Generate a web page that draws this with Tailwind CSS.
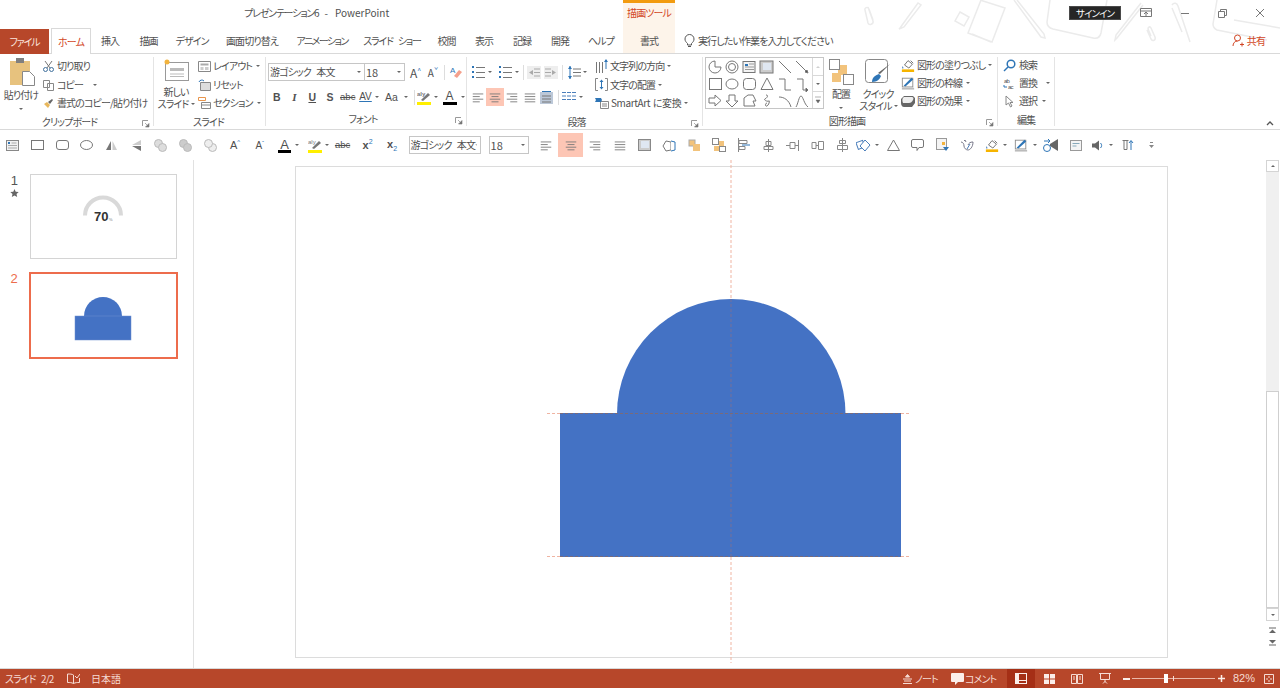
<!DOCTYPE html>
<html lang="ja">
<head>
<meta charset="UTF-8" />
<title>プレゼンテーション6 - PowerPoint</title>
<script src="https://cdn.jsdelivr.net/npm/@tailwindcss/browser@4"></script>
</head>
<body class="bg-white overflow-hidden">
<!-- shared small icons -->
<svg class="hidden">
  <symbol id="caret" viewBox="0 0 6 4"><path d="M1 1h4L3 3z" fill="#666"/></symbol>
  <symbol id="launch" viewBox="0 0 8 8"><path d="M.5 6V.5H6" fill="none" stroke="#999"/><path d="M3 3l3 3M7 3.500V7H3.500z" fill="#777" stroke="#777" stroke-width=".6"/></symbol>
  <symbol id="align-c" viewBox="0 0 16 16"><path d="M2 4.500h12M4 7.500h8M2 10.500h12M4 13.500h8" stroke="#777" fill="none"/></symbol>
  <symbol id="align-l" viewBox="0 0 16 16"><path d="M2 4.500h12M2 7.500h8M2 10.500h12M2 13.500h8" stroke="#777" fill="none"/></symbol>
  <symbol id="align-r" viewBox="0 0 16 16"><path d="M2 4.500h12M6 7.500h8M2 10.500h12M6 13.500h8" stroke="#777" fill="none"/></symbol>
  <symbol id="align-j" viewBox="0 0 16 16"><path d="M2 4.500h12M2 7.500h12M2 10.500h12M2 13.500h12" stroke="#777" fill="none"/></symbol>
  <symbol id="fill" viewBox="0 0 16 16"><path d="M4 8l4-5 5 4-4 4.500z" fill="#fff" stroke="#666"/><path d="M11 3l3 3" stroke="#666"/><path d="M2 9c-1 2-1 3 0 3s1-1 0-3z" fill="#4a7ebb"/><rect x="1" y="13" width="14" height="3" fill="#f6b400"/></symbol>
  <symbol id="line-pen" viewBox="0 0 16 16"><rect x="1.500" y="2.500" width="12" height="10" fill="#fff" stroke="#888"/><path d="M3 11l9-9 2 2-9 8z" fill="#2e75b6"/><rect x="1" y="13.500" width="14" height="2" fill="#bbb"/></symbol>
</svg>

<div class="relative w-[1280px] h-[688px] overflow-hidden flex flex-col text-[10px] tracking-[-0.9px] [word-spacing:4px] text-[#505050] font-['Noto_Sans_CJK_JP','Noto_Sans',sans-serif] [font-feature-settings:'palt']">

  <!-- faint doodles of the office theme -->
  <svg class="absolute left-[860px] top-0 w-[420px] h-[46px] pointer-events-none" viewBox="0 0 420 46" fill="none" stroke="#ebebeb" stroke-width="1.500">
    <path d="M8 7l5 14c1 3-4 5-5 2L5 10c-1-2 3-4 4-1l4 11"/>
    <path d="M40 28L58 3l3 2-17 22-5 2z"/>
    <path d="M100 12l9 5-5 9-9-5z"/>
    <path d="M120 0l25 8-13 34-24-9 13-33M112 34l19 8"/>
    <path d="M157 0l27 34 1 4-4-1-27-37"/>
    <path d="M190 0l-3 22c0 4 2 6 6 7l40 9c4 1 7-1 8-5l6-33"/>
    <path d="M283 5l-26 33-2 2 1-5 25-32"/>
    <path d="M287 30l4 9c2 3 5 1 4-2l-4-9c-1-2-3-1-3 1l3 7"/>
    <path d="M312 5c2-3 5-2 6 1l12 36M312 8l10 24"/>
    <path d="M357 0l-4 24c0 3 2 5 4 6l50 10M420 28l-46-8"/>
  </svg>

  <!-- title bar -->
  <div class="relative flex h-[28px] shrink-0 whitespace-nowrap">
    <div class="w-[244px]"></div>
    <div class="w-[379px] pt-[6px] leading-[14px] flex">
      <span class="tracking-[-1.2px]">プレゼンテーション6</span>
      <span class="ml-[6px] tracking-normal">-</span>
      <span class="ml-[7px] tracking-normal">PowerPoint</span>
    </div>
    <div class="w-[52px] bg-[#fdf4ea] border-t-[3px] border-[#f29b10] pt-[3px] text-center text-[#d24726] leading-[14px]">描画ツール</div>
    <div class="w-[394px]"></div>
    <div class="w-[52px] h-[14px] mt-[6px] bg-[#262626] border border-[#4a4a4a] text-white text-[9.500px] leading-[12px] text-center">サインイン</div>
    <div class="w-[19px]"></div>
    <div class="flex w-[140px]">
      <svg class="w-[12px] h-[10px] mt-[8px]" viewBox="0 0 12 10" fill="none" stroke="#777"><path d="M.5.500h11v8H.5zM.5 3h11M6 9V4M4 6l2-2 2 2"/></svg>
      <svg class="w-[10px] h-[10px] mt-[8px] ml-[28px]" viewBox="0 0 10 10" stroke="#777"><path d="M1 5.500h8"/></svg>
      <svg class="w-[9px] h-[9px] mt-[9px] ml-[28px]" viewBox="0 0 9 9" fill="none" stroke="#777"><path d="M.5 2.500h6v6h-6zM2.500 2.500v-2h6v6h-2"/></svg>
      <svg class="w-[10px] h-[10px] mt-[8px] ml-[28px]" viewBox="0 0 10 10" stroke="#777"><path d="M1 1l8 8M9 1l-8 8"/></svg>
    </div>
  </div>

  <!-- tabs -->
  <div class="relative flex h-[26px] shrink-0 border-b border-[#d9d9d9] leading-[25px] text-center whitespace-nowrap">
    <div class="w-[49px] h-[25px] mt-[1px] bg-[#b7472a] text-[#fbe5df] tracking-[-1.2px]">ファイル</div>
    <div class="w-[2px]"></div>
    <div class="w-[40px] h-[26px] bg-white border border-b-0 border-[#d9d9d9] text-[#d24726] z-10">ホーム</div>
    <div class="w-[38px]">挿入</div>
    <div class="w-[39px]">描画</div>
    <div class="w-[48px]">デザイン</div>
    <div class="w-[72px]">画面切り替え</div>
    <div class="w-[68px] tracking-[-1.6px]">アニメーション</div>
    <div class="w-[72px] whitespace-pre tracking-[-1.2px]">スライド ショー</div>
    <div class="w-[37px]">校閲</div>
    <div class="w-[38px]">表示</div>
    <div class="w-[38px]">記録</div>
    <div class="w-[38px]">開発</div>
    <div class="w-[44px]">ヘルプ</div>
    <div class="w-[52px] bg-[#fdf4ea]">書式</div>
    <div class="flex items-center pl-[9px] gap-[3px]">
      <svg class="w-[11px] h-[14px]" viewBox="0 0 11 14" fill="none" stroke="#555"><path d="M3.500 9.500C2 8 1 7 1 5a4.500 4.500 0 0 1 9 0c0 2-1 3-2.500 4.500v1.500h-4zM4 12.500h3"/></svg>
      <span>実行したい作業を入力してください</span>
    </div>
    <div class="ml-auto flex items-center pr-[15px] gap-[3px] text-[#d24726]">
      <svg class="w-[12px] h-[13px]" viewBox="0 0 12 13" fill="none" stroke="#d24726"><circle cx="5.500" cy="4" r="3"/><path d="M1 12c0-3 2-5 4.500-5M8 10.500h4M10 8.500v4"/></svg>
      <span>共有</span>
    </div>
  </div>

  <!-- ribbon -->
  <div class="relative flex h-[76px] shrink-0 border-b border-[#d9d9d9] leading-[18.5px] whitespace-nowrap">

    <!-- clipboard -->
    <div class="w-[154px] shrink-0 flex flex-col border-r border-[#e4e4e4] my-[3px]">
      <div class="flex h-[58px]">
        <div class="w-[42px] shrink-0 flex flex-col items-center">
          <svg class="w-[26px] h-[29px] ml-[2px]" viewBox="0 0 26 29"><rect x="1" y="4" width="20" height="24" fill="#e7c27e"/><rect x="7" y="1" width="8" height="5" fill="#7f7f7f"/><path d="M13.500 14.500h7l5 5v9h-12z" fill="#fff" stroke="#888"/></svg>
          <div class="leading-[14px] mt-[2px]">貼り付け</div>
          <svg class="w-[6px] h-[4px] mt-[5px]"><use href="#caret"/></svg>
        </div>
        <div class="flex flex-col ml-[1px]">
          <div class="flex items-center gap-[3px] h-[18.5px]">
            <svg class="w-[11px] h-[12px]" viewBox="0 0 11 12" fill="none" stroke="#41719c"><path d="M2 1l5 7M9 1L4 8" stroke="#777"/><circle cx="2.500" cy="9.500" r="2"/><circle cx="8.500" cy="9.500" r="2"/></svg>
            <span>切り取り</span>
          </div>
          <div class="flex items-center gap-[3px] h-[18.5px]">
            <svg class="w-[11px] h-[12px]" viewBox="0 0 11 12" fill="#fff" stroke="#888"><path d="M.5 1.500h6v7h-6zM4.500 4.500h6v7h-6z"/></svg>
            <span>コピー</span>
            <svg class="w-[6px] h-[4px] ml-[6px]"><use href="#caret"/></svg>
          </div>
          <div class="flex items-center gap-[3px] h-[18.5px]">
            <svg class="w-[11px] h-[11px]" viewBox="0 0 11 11"><path d="M1 6l3-2 3 3-2 3z" fill="#e8b75c"/><path d="M5 4l4-3 1 1-3 4z" fill="#666"/></svg>
            <span>書式のコピー/貼り付け</span>
          </div>
        </div>
      </div>
      <div class="relative h-[14px] mt-[2px] leading-[14px] text-center pr-[14px]">クリップボード
        <svg class="absolute right-[3px] bottom-[1px] w-[8px] h-[8px]"><use href="#launch"/></svg>
      </div>
    </div>

    <!-- slides -->
    <div class="w-[112px] shrink-0 flex flex-col border-r border-[#e4e4e4] my-[3px]">
      <div class="flex h-[58px]">
        <div class="w-[44px] shrink-0 flex flex-col items-center">
          <svg class="w-[26px] h-[23px] mt-[1px]" viewBox="0 0 26 23"><rect x="2.500" y="4.500" width="23" height="18" fill="#fff" stroke="#999"/><path d="M7 10h14v3H7z" fill="#bbb"/><path d="M7 16h14M7 18.500h14" stroke="#bbb"/><circle cx="4" cy="4" r="2.500" fill="#f2b33d"/></svg>
          <div class="leading-[12px] mt-[5px]">新しい</div>
          <div class="leading-[12px] flex items-center pl-[2px]">スライド<svg class="w-[6px] h-[4px] ml-[2px]"><use href="#caret"/></svg></div>
        </div>
        <div class="flex flex-col">
          <div class="flex items-center gap-[2px] h-[18.5px]">
            <svg class="w-[13px] h-[11px]" viewBox="0 0 13 11" fill="#fff" stroke="#888"><path d="M.5.500h12v10H.5z"/><path d="M2.500 2.500h8v2h-8z" fill="#aaa" stroke="none"/><path d="M2.500 6h3v3h-3zM7 6h3.500v3H7z" fill="#ccc" stroke="none"/></svg>
            <span>レイアウト</span>
            <svg class="w-[6px] h-[4px] ml-[1px]"><use href="#caret"/></svg>
          </div>
          <div class="flex items-center gap-[2px] h-[18.5px]">
            <svg class="w-[13px] h-[12px]" viewBox="0 0 13 12" fill="#ddd" stroke="#888"><path d="M2.500 3.500h10v8h-10z"/><path d="M1 3a3 3 0 0 1 5-1" fill="none" stroke="#2e75b6"/></svg>
            <span>リセット</span>
          </div>
          <div class="flex items-center gap-[2px] h-[18.5px]">
            <svg class="w-[13px] h-[12px]" viewBox="0 0 13 12" fill="#fff" stroke="#888"><path d="M.5 .5h7v3h-7z" stroke="#e8954c"/><path d="M3.500 5.500h9v6h-9zM3.500 8h9"/></svg>
            <span>セクション</span>
            <svg class="w-[6px] h-[4px] ml-[1px]"><use href="#caret"/></svg>
          </div>
        </div>
      </div>
      <div class="h-[14px] mt-[2px] leading-[14px] text-center pr-[2px]">スライド</div>
    </div>

    <!-- font -->
    <div class="w-[201px] shrink-0 flex flex-col border-r border-[#e4e4e4] my-[3px] pl-[2px]">
      <div class="h-[58px]">
        <div class="flex items-center h-[30px]">
          <div class="w-[97px] h-[18px] border border-[#c6c6c6] pl-[1px] leading-[16px] flex justify-between items-center pr-[2px]">游ゴシック 本文<svg class="w-[6px] h-[4px]"><use href="#caret"/></svg></div>
          <div class="w-[41px] h-[18px] -ml-[1px] border border-[#c6c6c6] pl-[1px] leading-[16px] flex justify-between items-center pr-[2px] text-[11px] tracking-normal">18<svg class="w-[6px] h-[4px]"><use href="#caret"/></svg></div>
          <div class="w-[19px] text-center ml-[1px] text-[12px] tracking-normal">A<span class="text-[#2e75b6] text-[7px] align-super">^</span></div>
          <div class="w-[16px] text-center text-[10px] tracking-normal">A<span class="text-[#2e75b6] text-[7px] align-super">ˇ</span></div>
          <div class="w-[1px] h-[15px] bg-[#ddd] ml-[3px]"></div>
          <svg class="w-[14px] h-[14px] ml-[4px]" viewBox="0 0 14 14"><text x="1" y="8" font-size="8" fill="#2e75b6" font-family="Liberation Sans">A</text><path d="M5 11l5-6 3 2-5 6z" fill="#f4a08c"/></svg>
        </div>
        <div class="flex items-center h-[18px] mt-[1px] text-[10.5px] font-bold tracking-normal">
          <div class="w-[17.5px] text-center font-['Liberation_Sans']">B</div>
          <div class="w-[18px] text-center italic font-['Liberation_Serif'] text-[11px]">I</div>
          <div class="w-[17.5px] text-center underline font-['Liberation_Sans']">U</div>
          <div class="w-[18px] text-center text-[#555] font-['Liberation_Sans']">S</div>
          <div class="w-[17.5px] text-center line-through font-normal font-['Liberation_Sans'] text-[9.500px]">abc</div>
          <div class="w-[18px] text-center font-normal font-['Liberation_Sans'] underline decoration-[#2e75b6] text-[10px]">AV</div>
          <svg class="w-[6px] h-[4px] -ml-[1px]"><use href="#caret"/></svg>
          <div class="w-[22px] text-center font-normal font-['Liberation_Sans'] ml-[1px]">Aa</div>
          <svg class="w-[6px] h-[4px]"><use href="#caret"/></svg>
          <div class="w-[1px] h-[15px] bg-[#ddd] ml-[5px]"></div>
          <svg class="w-[14px] h-[15px] ml-[2px]" viewBox="0 0 14 15"><path d="M4 10l7-7 2 2-7 6z" fill="#777"/><text x="0" y="6" font-size="6" fill="#777" font-family="Liberation Sans">aly</text><rect x="0" y="12" width="14" height="3" fill="#ffef00"/></svg>
          <svg class="w-[6px] h-[4px] ml-[2px]"><use href="#caret"/></svg>
          <div class="w-[14px] text-center leading-[12px] font-normal border-b-[3px] border-black h-[15px] ml-[4px] mr-[3px] text-[12px] font-['Liberation_Sans']">A</div>
          <svg class="w-[6px] h-[4px]"><use href="#caret"/></svg>
        </div>
      </div>
      <div class="relative h-[14px] mt-[2px] leading-[14px] text-center pr-[8px]">フォント
        <svg class="absolute right-[3px] bottom-[1px] w-[8px] h-[8px]"><use href="#launch"/></svg>
      </div>
    </div>

    <!-- paragraph -->
    <div class="w-[236px] shrink-0 flex flex-col border-r border-[#e4e4e4] my-[3px]">
      <div class="flex h-[58px]">
        <div class="w-[128px] shrink-0 pl-[3px]">
          <div class="flex items-center h-[30px]">
            <svg class="w-[16px] h-[14px]" viewBox="0 0 16 14" stroke="#777"><path d="M2 2h2M2 7h2M2 12h2" stroke="#2e75b6" stroke-width="2"/><path d="M6 2.500h9M6 7.500h9M6 12.500h9"/></svg>
            <svg class="w-[6px] h-[4px] ml-[1px]"><use href="#caret"/></svg>
            <svg class="w-[16px] h-[14px] ml-[4px]" viewBox="0 0 16 14" stroke="#777"><path d="M2 2h2M2 7h2M2 12h2" stroke="#2e75b6" stroke-width="2"/><path d="M6 2.500h9M6 7.500h9M6 12.500h9"/></svg>
            <svg class="w-[6px] h-[4px] ml-[1px]"><use href="#caret"/></svg>
            <div class="w-[1px] h-[15px] bg-[#ddd] ml-[3px]"></div>
            <svg class="w-[14px] h-[13px] ml-[3px]" viewBox="0 0 14 13"><rect width="14" height="13" fill="#eee"/><path d="M7 3h6M7 6.500h6M7 10h6" stroke="#aaa"/><path d="M6 4L2 6.500 6 9z" fill="#aaa"/></svg>
            <svg class="w-[14px] h-[13px] ml-[3px]" viewBox="0 0 14 13"><rect width="14" height="13" fill="#eee"/><path d="M1 3h6M1 6.500h6M1 10h6" stroke="#aaa"/><path d="M8 4l4 2.500L8 9z" fill="#aaa"/></svg>
            <div class="w-[1px] h-[15px] bg-[#ddd] ml-[4px]"></div>
            <svg class="w-[14px] h-[15px] ml-[4px]" viewBox="0 0 14 15" stroke="#777"><path d="M6 4h8M6 7.500h8M6 11h8"/><path d="M3 1v13" stroke="#2e75b6"/><path d="M1 4l2-3 2 3zM1 11l2 3 2-3z" fill="#2e75b6" stroke="none"/></svg>
            <svg class="w-[6px] h-[4px] ml-[1px]"><use href="#caret"/></svg>
          </div>
          <div class="flex items-center h-[18px] mt-[1px] -ml-[1px]">
            <div class="w-[17px] flex justify-center"><svg class="w-[14px] h-[14px]" viewBox="0 0 16 16"><use href="#align-l"/></svg></div>
            <div class="w-[17.500px] h-[18px] bg-[#fdc6b5] flex items-center justify-center"><svg class="w-[14px] h-[14px]" viewBox="0 0 16 16"><use href="#align-c"/></svg></div>
            <div class="w-[17.500px] flex justify-center"><svg class="w-[14px] h-[14px]" viewBox="0 0 16 16"><use href="#align-r"/></svg></div>
            <div class="w-[17px] flex justify-center"><svg class="w-[14px] h-[14px]" viewBox="0 0 16 16"><use href="#align-j"/></svg></div>
            <div class="w-[17px] flex justify-center"><svg class="w-[13px] h-[13px]" viewBox="0 0 13 13"><rect y="1" width="13" height="12" fill="#bcc8d8"/><path d="M2 5h9M2 8h9M2 11h9" stroke="#777"/><path d="M2 .5h9" stroke="#2e75b6"/></svg></div>
            <div class="w-[1px] h-[15px] bg-[#ddd] ml-[3px]"></div>
            <svg class="w-[14px] h-[12px] ml-[3px]" viewBox="0 0 14 12" stroke="#4a7ebb"><path d="M0 1.500h4M5 1.500h4M10 1.500h4M0 5h4M5 5h4M10 5h4M0 8.500h4M5 8.500h4M10 8.500h4"/></svg>
            <svg class="w-[6px] h-[4px] ml-[2px]"><use href="#caret"/></svg>
          </div>
        </div>
        <div class="flex flex-col">
          <div class="flex items-center gap-[2px] h-[18.5px]">
            <svg class="w-[13px] h-[14px]" viewBox="0 0 13 14" stroke="#777"><path d="M1.500 3v11M4.500 3v11M7.500 3v11"/><path d="M11 1v9" stroke="#2e75b6"/><path d="M9 3l2-3 2 3z" fill="#2e75b6" stroke="none"/></svg>
            <span>文字列の方向</span>
            <svg class="w-[6px] h-[4px]"><use href="#caret"/></svg>
          </div>
          <div class="flex items-center gap-[2px] h-[18.5px]">
            <svg class="w-[13px] h-[13px]" viewBox="0 0 13 13" fill="none" stroke="#888"><path d="M3 .5H.5v12H3M10 .5h2.500v12H10"/><path d="M6.500 3v7" stroke="#2e75b6"/><path d="M4.500 4l2-2.500L8.500 4zM4.500 9l2 2.500L8.500 9z" fill="#2e75b6" stroke="none"/></svg>
            <span>文字の配置</span>
            <svg class="w-[6px] h-[4px]"><use href="#caret"/></svg>
          </div>
          <div class="flex items-center gap-[2px] h-[18.5px]">
            <svg class="w-[14px] h-[12px]" viewBox="0 0 14 12" fill="#fff" stroke="#888"><path d="M5.500 4.500h8v7h-8zM7 7h5M7 9h5"/><path d="M0 1h6l1 2-1 2H0l1-2z" fill="#2e75b6" stroke="none"/></svg>
            <span class="tracking-[-0.4px] [word-spacing:1px]">SmartArt に変換</span>
            <svg class="w-[6px] h-[4px]"><use href="#caret"/></svg>
          </div>
        </div>
      </div>
      <div class="relative h-[14px] mt-[2px] leading-[14px] text-center pr-[16px]">段落
        <svg class="absolute right-[3px] bottom-[1px] w-[8px] h-[8px]"><use href="#launch"/></svg>
      </div>
    </div>

    <!-- drawing -->
    <div class="w-[295px] shrink-0 flex flex-col border-r border-[#e4e4e4] my-[3px] pl-[2px]">
      <div class="flex h-[58px]">
        <div class="flex w-[119px] shrink-0 h-[52px] border border-[#c6c6c6]">
          <svg class="w-[106px] h-[50px]" viewBox="0 0 106 50" fill="none" stroke="#777">
            <!-- row 1 -->
            <path d="M9 3a6 6 0 1 0 6 6H9z"/>
            <circle cx="26" cy="9" r="6"/><circle cx="26" cy="9" r="3.500"/>
            <rect x="37" y="3.500" width="12" height="11" fill="#f4f4f4"/><path d="M43 6h5M39 9h9M39 11.500h9" stroke="#999"/><path d="M39 7h3" stroke="#2e75b6" stroke-width="2"/>
            <rect x="54" y="3" width="13" height="12" fill="#ccc"/><rect x="57" y="5" width="8" height="7" fill="#dfe7f2" stroke="none"/>
            <path d="M73 3l12 12M90 3l11 11"/><path d="M102 15l-3-1 2-2z" fill="#555"/>
            <!-- row 2 -->
            <rect x="3.500" y="20.500" width="12" height="11"/>
            <ellipse cx="26" cy="26" rx="6" ry="5"/>
            <rect x="37.500" y="20.500" width="12" height="11" rx="3"/>
            <path d="M61 20l6 11.500H55z"/>
            <path d="M73 21h6v11h6M91 21h6v11h4"/><path d="M102 32l-2-2v4z" fill="#555"/>
            <!-- row 3 -->
            <path d="M3 40h6v-3l6 5.500-6 5.500v-3H3z"/>
            <path d="M23 37h6v6h3l-6 6-6-6h3z"/>
            <path d="M38 48v-8l4-3h5l3 6h-3l2 5z"/>
            <path d="M60 37c3 0 1 3-1 4s3 3 4 2 0 4-2 5-2-3 0-3"/>
            <path d="M73 39c5 0 10 3 12 10M90 49c2-3 3-11 5-11s3 8 7 11"/>
          </svg>
          <div class="flex flex-col w-[11px] border-l border-[#d9d9d9]">
            <div class="h-[17px] flex items-center justify-center bg-white"><svg class="w-[6px] h-[4px] rotate-180 opacity-30"><use href="#caret"/></svg></div>
            <div class="h-[17px] border-y border-[#d9d9d9] flex items-center justify-center"><svg class="w-[6px] h-[4px]"><use href="#caret"/></svg></div>
            <div class="h-[16px] flex items-center justify-center"><svg class="w-[6px] h-[8px]" viewBox="0 0 6 8"><path d="M0 1h6M1 4h4l-2 3z" fill="#666" stroke="#666" stroke-width=".5"/></svg></div>
          </div>
        </div>
        <div class="w-[34px] shrink-0 flex flex-col items-center">
          <svg class="w-[25px] h-[26px] mt-[2px]" viewBox="0 0 25 26"><rect x="9" y="6" width="9" height="10" fill="#f2c37c"/><rect x="3" y="14" width="9" height="9" fill="#f2c37c"/><rect x=".5" y=".5" width="10" height="10" fill="#fff" stroke="#888"/><rect x="14.500" y="15.500" width="10" height="10" fill="#fff" stroke="#888"/></svg>
          <div class="leading-[14px] mt-[2px]">配置</div>
          <svg class="w-[6px] h-[4px] mt-[5px]"><use href="#caret"/></svg>
        </div>
        <div class="w-[40px] shrink-0 flex flex-col items-center">
          <svg class="w-[26px] h-[26px] mt-[2px]" viewBox="0 0 26 26"><rect x=".5" y=".5" width="22" height="23" rx="3" fill="#fff" stroke="#888"/><path d="M25 5L15 15l-2-1z" fill="#666"/><path d="M7 23c0-5 4-7 7-8l2 2c-1 3-4 6-9 6z" fill="#2e75b6"/></svg>
          <div class="leading-[12px] mt-[3px]">クイック</div>
          <div class="leading-[12px] flex items-center pl-[2px]">スタイル<svg class="w-[6px] h-[4px] ml-[1px]"><use href="#caret"/></svg></div>
        </div>
        <div class="flex flex-col -mt-[1px] ml-[3px]">
          <div class="flex items-center gap-[2px] h-[18px]">
            <svg class="w-[14px] h-[14px]"><use href="#fill"/></svg>
            <span>図形の塗りつぶし</span>
            <svg class="w-[6px] h-[4px]"><use href="#caret"/></svg>
          </div>
          <div class="flex items-center gap-[2px] h-[18px]">
            <svg class="w-[14px] h-[14px]"><use href="#line-pen"/></svg>
            <span>図形の枠線</span>
            <svg class="w-[6px] h-[4px] ml-[1px]"><use href="#caret"/></svg>
          </div>
          <div class="flex items-center gap-[2px] h-[18px]">
            <svg class="w-[14px] h-[13px]" viewBox="0 0 14 13"><path d="M3 1h9l2 2v5l-3 4H3C1 12 0 10 0 8V4z" fill="#666"/><path d="M3 2h8c1 0 2 1 1 3s-2 3-4 3H2C1 6 1 3 3 2z" fill="#eee"/></svg>
            <span>図形の効果</span>
            <svg class="w-[6px] h-[4px] ml-[1px]"><use href="#caret"/></svg>
          </div>
        </div>
      </div>
      <div class="relative h-[14px] mt-[2px] leading-[14px] text-center pr-[8px]">図形描画
        <svg class="absolute right-[3px] bottom-[1px] w-[8px] h-[8px]"><use href="#launch"/></svg>
      </div>
    </div>

    <!-- editing -->
    <div class="w-[57px] shrink-0 flex flex-col border-r border-[#e4e4e4] my-[3px] pl-[5px]">
      <div class="flex flex-col h-[58px] -mt-[1px]">
        <div class="flex items-center gap-[3px] h-[18px]">
          <svg class="w-[13px] h-[13px]" viewBox="0 0 13 13" fill="none" stroke="#2e75b6" stroke-width="1.500"><circle cx="8" cy="5" r="3.800"/><path d="M5 8l-4 4"/></svg>
          <span>検索</span>
        </div>
        <div class="flex items-center gap-[3px] h-[18px]">
          <svg class="w-[13px] h-[13px]" viewBox="0 0 13 13"><text x="1" y="5.500" font-size="6" fill="#555" font-family="Liberation Sans">ab</text><text x="5" y="12" font-size="6" fill="#555" font-family="Liberation Sans">ac</text><path d="M1 8v2h3" stroke="#2e75b6" fill="none"/></svg>
          <span>置換</span>
          <svg class="w-[6px] h-[4px] ml-[5px]"><use href="#caret"/></svg>
        </div>
        <div class="flex items-center gap-[3px] h-[18px]">
          <svg class="w-[13px] h-[13px]" viewBox="0 0 13 13" fill="#fff" stroke="#888"><path d="M3 1v9l2.500-2 2 4 1.500-1-2-3.500h3z"/></svg>
          <span>選択</span>
          <svg class="w-[6px] h-[4px] ml-[1px]"><use href="#caret"/></svg>
        </div>
      </div>
      <div class="h-[14px] mt-[3px] leading-[14px] text-center pr-[5px]">編集</div>
    </div>

    <svg class="absolute right-[6px] bottom-[3px] w-[8px] h-[5px]" viewBox="0 0 8 5" fill="none" stroke="#555" stroke-width="1.300"><path d="M1 4l3-3 3 3"/></svg>
  </div>

  <!-- customised toolbar -->
  <div class="flex items-center h-[30px] shrink-0 pl-[0.500px] whitespace-nowrap tracking-normal">
    <div class="w-[24.700px] shrink-0 flex justify-center"><svg class="w-[13px] h-[11px]" viewBox="0 0 13 11"><rect x=".5" y=".5" width="12" height="10" fill="#f2f2f2" stroke="#888"/><path d="M5.500 3h5M2 5.500h9M2 8h9" stroke="#aaa"/><path d="M2 3h2" stroke="#2e75b6" stroke-width="2"/></svg></div>
    <div class="w-[24.700px] shrink-0 flex justify-center"><svg class="w-[13px] h-[10px]" viewBox="0 0 13 10"><rect x=".5" y=".5" width="12" height="9" fill="none" stroke="#777"/></svg></div>
    <div class="w-[24.700px] shrink-0 flex justify-center"><svg class="w-[13px] h-[10px]" viewBox="0 0 13 10"><rect x=".5" y=".5" width="12" height="9" rx="2.500" fill="none" stroke="#777"/></svg></div>
    <div class="w-[24.700px] shrink-0 flex justify-center"><svg class="w-[13px] h-[10px]" viewBox="0 0 13 10"><ellipse cx="6.500" cy="5" rx="6" ry="4.500" fill="none" stroke="#777"/></svg></div>
    <div class="w-[24.700px] shrink-0 flex justify-center"><svg class="w-[11px] h-[11px]" viewBox="0 0 11 11"><path d="M5 1v9H0z" fill="#777"/><path d="M6.500 1v9H11z" fill="#ccc"/></svg></div>
    <div class="w-[24.700px] shrink-0 flex justify-center"><svg class="w-[9px] h-[11px]" viewBox="0 0 9 11"><path d="M9 0v5H0z" fill="#ccc"/><path d="M9 6v5L0 6z" fill="#777"/></svg></div>
    <div class="w-[24.700px] shrink-0 flex justify-center"><svg class="w-[13px] h-[13px]" viewBox="0 0 13 13" fill="#ddd" stroke="#bbb"><circle cx="4.500" cy="4.500" r="4"/><circle cx="8.500" cy="8.500" r="4"/></svg></div>
    <div class="w-[24.700px] shrink-0 flex justify-center"><svg class="w-[13px] h-[13px]" viewBox="0 0 13 13" fill="#ccc" stroke="#bbb"><circle cx="4.500" cy="4.500" r="4"/><circle cx="8.500" cy="8.500" r="4"/></svg></div>
    <div class="w-[24.700px] shrink-0 flex justify-center"><svg class="w-[13px] h-[13px]" viewBox="0 0 13 13" fill="#eee" stroke="#bbb"><circle cx="8.500" cy="8.500" r="4"/><circle cx="4.500" cy="4.500" r="4"/></svg></div>
    <div class="w-[24.700px] shrink-0 text-center text-[11px] font-['Liberation_Sans']">A<span class="text-[#2e75b6] text-[6px] align-super">^</span></div>
    <div class="w-[24.700px] shrink-0 text-center text-[10px] font-['Liberation_Sans']">A<span class="text-[#2e75b6] text-[6px] align-super">ˇ</span></div>
    <div class="w-[25px] shrink-0 flex justify-center"><div class="w-[13px] h-[15px] border-b-[3px] border-black text-center text-[13px] leading-[13px] font-['Liberation_Sans']">A</div></div>
    <svg class="w-[6px] h-[4px] -ml-[3px] shrink-0"><use href="#caret"/></svg>
    <div class="w-[25px] shrink-0 ml-[2px] flex justify-center"><svg class="w-[14px] h-[15px]" viewBox="0 0 14 15"><path d="M4 10l7-7 2 2-7 6z" fill="#777"/><text x="0" y="6" font-size="6" fill="#777" font-family="Liberation Sans">aly</text><rect y="12" width="14" height="3" fill="#ffef00"/></svg></div>
    <svg class="w-[6px] h-[4px] -ml-[3px] shrink-0"><use href="#caret"/></svg>
    <div class="w-[25px] shrink-0 text-center text-[9.500px] line-through font-['Liberation_Sans']">abc</div>
    <div class="w-[25px] shrink-0 text-center font-bold font-['Liberation_Sans'] text-[11px]">x<span class="text-[#2e75b6] font-normal text-[7px] align-super">2</span></div>
    <div class="w-[24px] shrink-0 text-center font-bold font-['Liberation_Sans'] text-[11px]">x<span class="text-[#2e75b6] font-normal text-[7px] align-sub">2</span></div>
    <div class="w-[72px] shrink-0 h-[18px] ml-[4.500px] border border-[#c6c6c6] pl-[1px] leading-[16px] flex justify-between items-center pr-[2px] tracking-[-0.9px]">游ゴシック 本文<svg class="w-[6px] h-[4px]"><use href="#caret"/></svg></div>
    <div class="w-[40px] shrink-0 h-[18px] ml-[8px] border border-[#c6c6c6] pl-[1px] leading-[16px] flex justify-between items-center pr-[2px] text-[11px]">18<svg class="w-[6px] h-[4px]"><use href="#caret"/></svg></div>
    <div class="w-[25px] shrink-0 ml-[4.500px] flex justify-center"><svg class="w-[14px] h-[14px]" viewBox="0 0 16 16"><use href="#align-l"/></svg></div>
    <div class="w-[25px] shrink-0 h-[24px] bg-[#fdc6b5] flex items-center justify-center"><svg class="w-[14px] h-[14px]" viewBox="0 0 16 16"><use href="#align-c"/></svg></div>
    <div class="w-[24.700px] shrink-0 flex justify-center"><svg class="w-[14px] h-[14px]" viewBox="0 0 16 16"><use href="#align-r"/></svg></div>
    <div class="w-[24.700px] shrink-0 flex justify-center"><svg class="w-[14px] h-[14px]" viewBox="0 0 16 16"><use href="#align-j"/></svg></div>
    <div class="w-[24.700px] shrink-0 flex justify-center"><svg class="w-[13px] h-[12px]" viewBox="0 0 13 12"><rect x=".5" y=".5" width="12" height="11" fill="#ccc" stroke="#888"/><rect x="3" y="2" width="8" height="7" fill="#dfe7f2"/></svg></div>
    <div class="w-[24.700px] shrink-0 flex justify-center"><svg class="w-[14px] h-[14px]" viewBox="0 0 14 14" fill="#fff" stroke="#777"><path d="M1 8l3-5 5 1v8l-5 1z"/><path d="M9 3l4 1v8l-4 1" stroke="#2e75b6"/></svg></div>
    <div class="w-[24.700px] shrink-0 flex justify-center"><svg class="w-[13px] h-[13px]" viewBox="0 0 13 13"><rect x="1" y="1" width="6" height="6" fill="#f2c37c" stroke="#aaa"/><rect x="5" y="5" width="7" height="7" fill="#f2c37c"/></svg></div>
    <div class="w-[24.700px] shrink-0 flex justify-center"><svg class="w-[14px] h-[14px]" viewBox="0 0 14 14"><rect x=".5" y=".5" width="6" height="6" fill="#fff" stroke="#888"/><rect x="7" y="3" width="5" height="5" fill="#f2c37c"/><rect x="2" y="8" width="5" height="5" fill="#f2c37c"/><rect x="7.500" y="8.500" width="6" height="5" fill="#fff" stroke="#888"/></svg></div>
    <div class="w-[24.700px] shrink-0 flex justify-center"><svg class="w-[13px] h-[14px]" viewBox="0 0 13 14" fill="#fff" stroke="#888"><path d="M1.500 0v14"/><path d="M2 2.500h8v3H2zM2 8.500h6v3H2z"/><path d="M5 7h8" stroke="#2e75b6"/></svg></div>
    <div class="w-[24.700px] shrink-0 flex justify-center"><svg class="w-[11px] h-[13px]" viewBox="0 0 11 13" fill="#fff" stroke="#888"><path d="M5.500 0v13M3 2.500h5v4H3zM1 7.500h9v3H1z"/></svg></div>
    <div class="w-[24.700px] shrink-0 flex justify-center"><svg class="w-[13px] h-[11px]" viewBox="0 0 13 11" fill="#fff" stroke="#888"><path d="M4 2.500h5v6H4zM0 5.500h4M9 5.500h4"/><path d="M12.500 0v11"/></svg></div>
    <div class="w-[24.700px] shrink-0 flex justify-center"><svg class="w-[14px] h-[11px]" viewBox="0 0 14 11" fill="#fff" stroke="#888"><path d="M1 2.500h4v6H1zM7.500 1.500h5v8h-5zM5 5.500h3"/></svg></div>
    <div class="w-[24.700px] shrink-0 flex justify-center"><svg class="w-[11px] h-[14px]" viewBox="0 0 11 14" fill="#fff" stroke="#888"><path d="M5.500 0v14M2.500 2.500h6v3h-6zM.5 7.500h10v4H.5z"/></svg></div>
    <div class="w-[18px] shrink-0 flex justify-center"><svg class="w-[15px] h-[13px]" viewBox="0 0 15 13" fill="#fff" stroke="#4a7ebb"><rect x="1" y="2.500" width="7" height="7" transform="rotate(-20 4 6)"/><path d="M9 1l5 5-5 6-5-5z"/></svg></div>
    <svg class="w-[6px] h-[4px] ml-[1px] shrink-0"><use href="#caret"/></svg>
    <div class="w-[25px] shrink-0 ml-[1px] flex justify-center"><svg class="w-[13px] h-[12px]" viewBox="0 0 13 12"><path d="M6.500 1l6 10.500H.5z" fill="none" stroke="#777"/></svg></div>
    <div class="w-[24.700px] shrink-0 flex justify-center"><svg class="w-[13px] h-[12px]" viewBox="0 0 13 12"><path d="M2 .5h9a1.500 1.500 0 0 1 1.500 1.500v5A1.500 1.500 0 0 1 11 8.500H8l-2 3v-3H2A1.500 1.500 0 0 1 .5 7V2A1.500 1.500 0 0 1 2 .5z" fill="none" stroke="#777"/></svg></div>
    <div class="w-[24.700px] shrink-0 flex justify-center"><svg class="w-[13px] h-[14px]" viewBox="0 0 13 14"><rect x=".5" y=".5" width="10" height="11" fill="#f4f4f4" stroke="#999"/><rect x="6" y="4" width="3" height="3" fill="#f2b33d"/><path d="M7 9h6l-3 4z" fill="#2e75b6"/></svg></div>
    <div class="w-[24.700px] shrink-0 flex justify-center"><svg class="w-[14px] h-[13px]" viewBox="0 0 14 13" fill="none" stroke="#778"><path d="M1 3c2 0 3 2 3 4s2 4 4 4 5-3 5-8c-3 0-4 1-5 3M4 2l1-1 1 2"/><path d="M7 10l3-5" stroke="#4a7ebb"/></svg></div>
    <div class="w-[25px] shrink-0 flex justify-center"><svg class="w-[14px] h-[14px]"><use href="#fill"/></svg></div>
    <svg class="w-[6px] h-[4px] -ml-[3px] shrink-0"><use href="#caret"/></svg>
    <div class="w-[27px] shrink-0 flex justify-center"><svg class="w-[14px] h-[14px]"><use href="#line-pen"/></svg></div>
    <svg class="w-[6px] h-[4px] -ml-[3px] shrink-0"><use href="#caret"/></svg>
    <div class="w-[26px] shrink-0 flex justify-center"><svg class="w-[15px] h-[14px]" viewBox="0 0 15 14"><path d="M7 6l8-5v12L7 8z" fill="#666"/><circle cx="4" cy="10" r="3.500" fill="#fff" stroke="#2e75b6"/><path d="M1 3h6M5 1l2 2-2 2" fill="none" stroke="#2e75b6"/></svg></div>
    <div class="w-[24px] shrink-0 flex justify-center"><svg class="w-[12px] h-[11px]" viewBox="0 0 12 11" fill="#f4f4f4" stroke="#999"><rect x=".5" y=".5" width="11" height="10"/><path d="M2.500 3.500h7M2.500 6h4" stroke="#8ab"/></svg></div>
    <div class="w-[20px] shrink-0 flex justify-center"><svg class="w-[11px] h-[11px]" viewBox="0 0 11 11"><path d="M0 3.500h3L7 .5v10l-4-3H0z" fill="#666"/><path d="M8.500 3c1.500 1.500 1.500 3.500 0 5" fill="none" stroke="#2e75b6"/></svg></div>
    <svg class="w-[6px] h-[4px] shrink-0"><use href="#caret"/></svg>
    <div class="w-[28px] shrink-0 flex justify-center"><svg class="w-[12px] h-[12px]" viewBox="0 0 12 12" fill="none" stroke="#777"><path d="M.5 1.500h6M2 1.500v9h3v-9"/><path d="M9 11V2M7 4l2-2.500L11 4" stroke="#2e75b6"/></svg></div>
    <div class="w-[20px] shrink-0 flex justify-center"><svg class="w-[5px] h-[6px]" viewBox="0 0 5 6" fill="#888"><path d="M1 0h3v1H1zM0 3h5L2.500 6z"/></svg></div>
  </div>

  <!-- workspace -->
  <div class="relative flex flex-1 min-h-0 tracking-normal">

    <!-- thumbnails -->
    <div class="w-[194px] shrink-0 border-r border-[#e1e1e1] pt-[14px] text-[13px] font-['Liberation_Sans']">
      <div class="flex">
        <div class="w-[29.500px] flex flex-col items-center pr-[1px] leading-[13px] text-[#555]">1
          <svg class="w-[9px] h-[8px] mt-[2px]" viewBox="0 0 9 8"><path d="M4.500 0l1.200 2.700 3 .3-2.200 2 .7 3-2.700-1.500L1.800 8l.7-3L.3 3l3-.3z" fill="#666"/></svg>
        </div>
        <div class="w-[147px] h-[85px] border border-[#d4d4d4] bg-white flex justify-center">
          <svg class="w-[60px] h-[60px] mt-[10px]" viewBox="0 0 60 60"><path d="M12 30.500a18 18 0 0 1 36 0" fill="none" stroke="#d9d9d9" stroke-width="4"/><text x="21" y="36" font-size="13" font-weight="bold" fill="#333" font-family="Liberation Sans">70</text><text x="36" y="36" font-size="4" fill="#777" font-family="Liberation Sans">%</text></svg>
        </div>
      </div>
      <div class="flex mt-[13px] text-[#ed6c4c]">
        <div class="w-[29px] text-center pr-[1px] leading-[13px]">2</div>
        <div class="w-[149px] h-[87px] border-2 border-[#ed6c4c] bg-white flex justify-center">
          <svg class="w-[60px] h-[60px] mt-[18px] -ml-[2px]" viewBox="0 0 60 50"><path d="M11 19a19 19 0 0 1 38 0z" fill="#4472c4"/><rect x="2" y="19" width="56" height="24" fill="#4472c4" stroke="#6d8fce" stroke-width=".5"/></svg>
        </div>
      </div>
    </div>

    <!-- slide canvas -->
    <div class="relative flex-1">
      <div class="absolute left-[101px] top-[6px] w-[873px] h-[492px] bg-white border border-[#dcdcdc]"></div>
      <svg class="absolute left-0 top-0 w-[1086px] h-[508px]" viewBox="0 0 1086 508">
        <path d="M423 254a114.250 115 0 0 1 228.500 0z" fill="#4472c4"/>
        <rect x="366" y="253" width="341" height="144" fill="#4472c4"/>
        <g fill="none" stroke-width="1" stroke-dasharray="3 2">
          <path d="M537 0v139M537 397v106" stroke="#efb4a2"/>
          <path d="M537 139v258" stroke="#75709a"/>
          <path d="M353 253.500h13M707 253.500h9M353 396.500h13M707 396.500h9" stroke="#efb4a2"/>
          <path d="M366 253.500h341M366 396.500h341" stroke="#7a6a78"/>
        </g>
      </svg>
    </div>

    <!-- scrollbar -->
    <div class="w-[13px] shrink-0 flex flex-col mr-[1px]">
      <div class="h-[12px] border border-[#d4d4d4] bg-white flex items-center justify-center"><svg class="w-[6px] h-[4px] rotate-180"><use href="#caret"/></svg></div>
      <div class="h-[219px] bg-[#f0f0f0]"></div>
      <div class="h-[217px] border border-[#cfcfcf] bg-white"></div>
      <div class="h-[13px] border border-[#d4d4d4] bg-white flex items-center justify-center"><svg class="w-[6px] h-[4px]"><use href="#caret"/></svg></div>
      <svg class="w-[7px] h-[7px] mt-[6px] ml-[3px]" viewBox="0 0 7 7" fill="#666"><path d="M0 .5h7v1H0zM0 6h7L3.500 2.500z"/></svg>
      <svg class="w-[7px] h-[7px] mt-[5px] ml-[3px]" viewBox="0 0 7 7" fill="#666"><path d="M0 5.500h7v1H0zM0 1h7L3.500 4.500z"/></svg>
    </div>
  </div>

  <!-- status bar -->
  <div class="flex items-center h-[20px] shrink-0 bg-[#b7472a] text-[#f6dcd4] border-t border-[#d9d9d9] leading-[19px] whitespace-nowrap">
    <span class="ml-[5px] w-[62px]">スライド 2/2</span>
    <svg class="w-[13px] h-[11px]" viewBox="0 0 13 11" fill="none" stroke="#f6dcd4"><path d="M6.500 2v8.500M6.500 2C5 1 3 1 .5 1v8.500c2.500 0 4 0 6 1 2-1 3.500-1 6-1V5M8 3l2 2 3-4"/></svg>
    <span class="ml-[11px] tracking-normal">日本語</span>
    <div class="ml-auto flex items-center pr-[6px]">
      <svg class="w-[11px] h-[10px]" viewBox="0 0 11 10" stroke="#f6dcd4" fill="#f6dcd4"><path d="M3.500 3h4L5.500.5zM1 5h9M2 7h7M1 9.500h9" stroke-width="1"/></svg>
      <span class="ml-[2px] w-[36px]">ノート</span>
      <svg class="w-[13px] h-[12px] mr-[1px]" viewBox="0 0 13 12"><path d="M1 0h11a1 1 0 0 1 1 1v7a1 1 0 0 1-1 1H7l-3 3V9H1a1 1 0 0 1-1-1V1a1 1 0 0 1 1-1z" fill="#fbeee9"/></svg>
      <span class="w-[42px]">コメント</span>
      <div class="w-[28px] h-[19px] bg-[#a52f16] flex items-center justify-center"><svg class="w-[12px] h-[11px]" viewBox="0 0 12 11"><path d="M0 0h12v11H0z" fill="#fbeee9"/><path d="M4 1h7v6H4zM4 8h7v2H4z" fill="#a52f16"/></svg></div>
      <div class="w-[28px] flex justify-center"><svg class="w-[11px] h-[10px]" viewBox="0 0 11 10" fill="#fbeee9"><path d="M0 0h5v4.500H0zM6 0h5v4.500H6zM0 5.500h5V10H0zM6 5.500h5V10H6z"/></svg></div>
      <div class="w-[28px] flex justify-center"><svg class="w-[12px] h-[10px]" viewBox="0 0 12 10" fill="none" stroke="#f6dcd4"><path d="M.5.500h5v9h-5zM6.500.5h5v9h-5zM2 3h2M2 5h2M8 3h2M8 5h2"/></svg></div>
      <div class="w-[28px] flex justify-center"><svg class="w-[12px] h-[11px]" viewBox="0 0 12 11" fill="none" stroke="#f6dcd4"><path d="M0 .5h12M1.500.5v6h9v-6M6 7v2M4 10.500l2-2 2 2"/></svg></div>
      <div class="w-[7px] h-[2px] ml-[4px] bg-[#fbeee9]"></div>
      <div class="relative w-[83px] h-[1px] ml-[2px] bg-[#eab8a9]">
        <div class="absolute left-[32px] -top-[4px] w-[4px] h-[9px] bg-white"></div>
        <div class="absolute left-[41px] -top-[2px] w-[1px] h-[5px] bg-[#f6dcd4]"></div>
      </div>
      <svg class="w-[7px] h-[7px] ml-[3px]" viewBox="0 0 7 7" stroke="#fbeee9" stroke-width="1.500"><path d="M0 3.500h7M3.500 0v7"/></svg>
      <span class="ml-[8px] w-[24px] text-[11px] tracking-normal font-['Liberation_Sans']">82%</span>
      <svg class="w-[10px] h-[10px] ml-[7px]" viewBox="0 0 10 10" fill="none" stroke="#f6dcd4"><path d="M.5.5h9v9h-9zM2 5h2M6 5h2M5 2v2M5 6v2"/></svg>
    </div>
  </div>
</div>
</body>
</html>
